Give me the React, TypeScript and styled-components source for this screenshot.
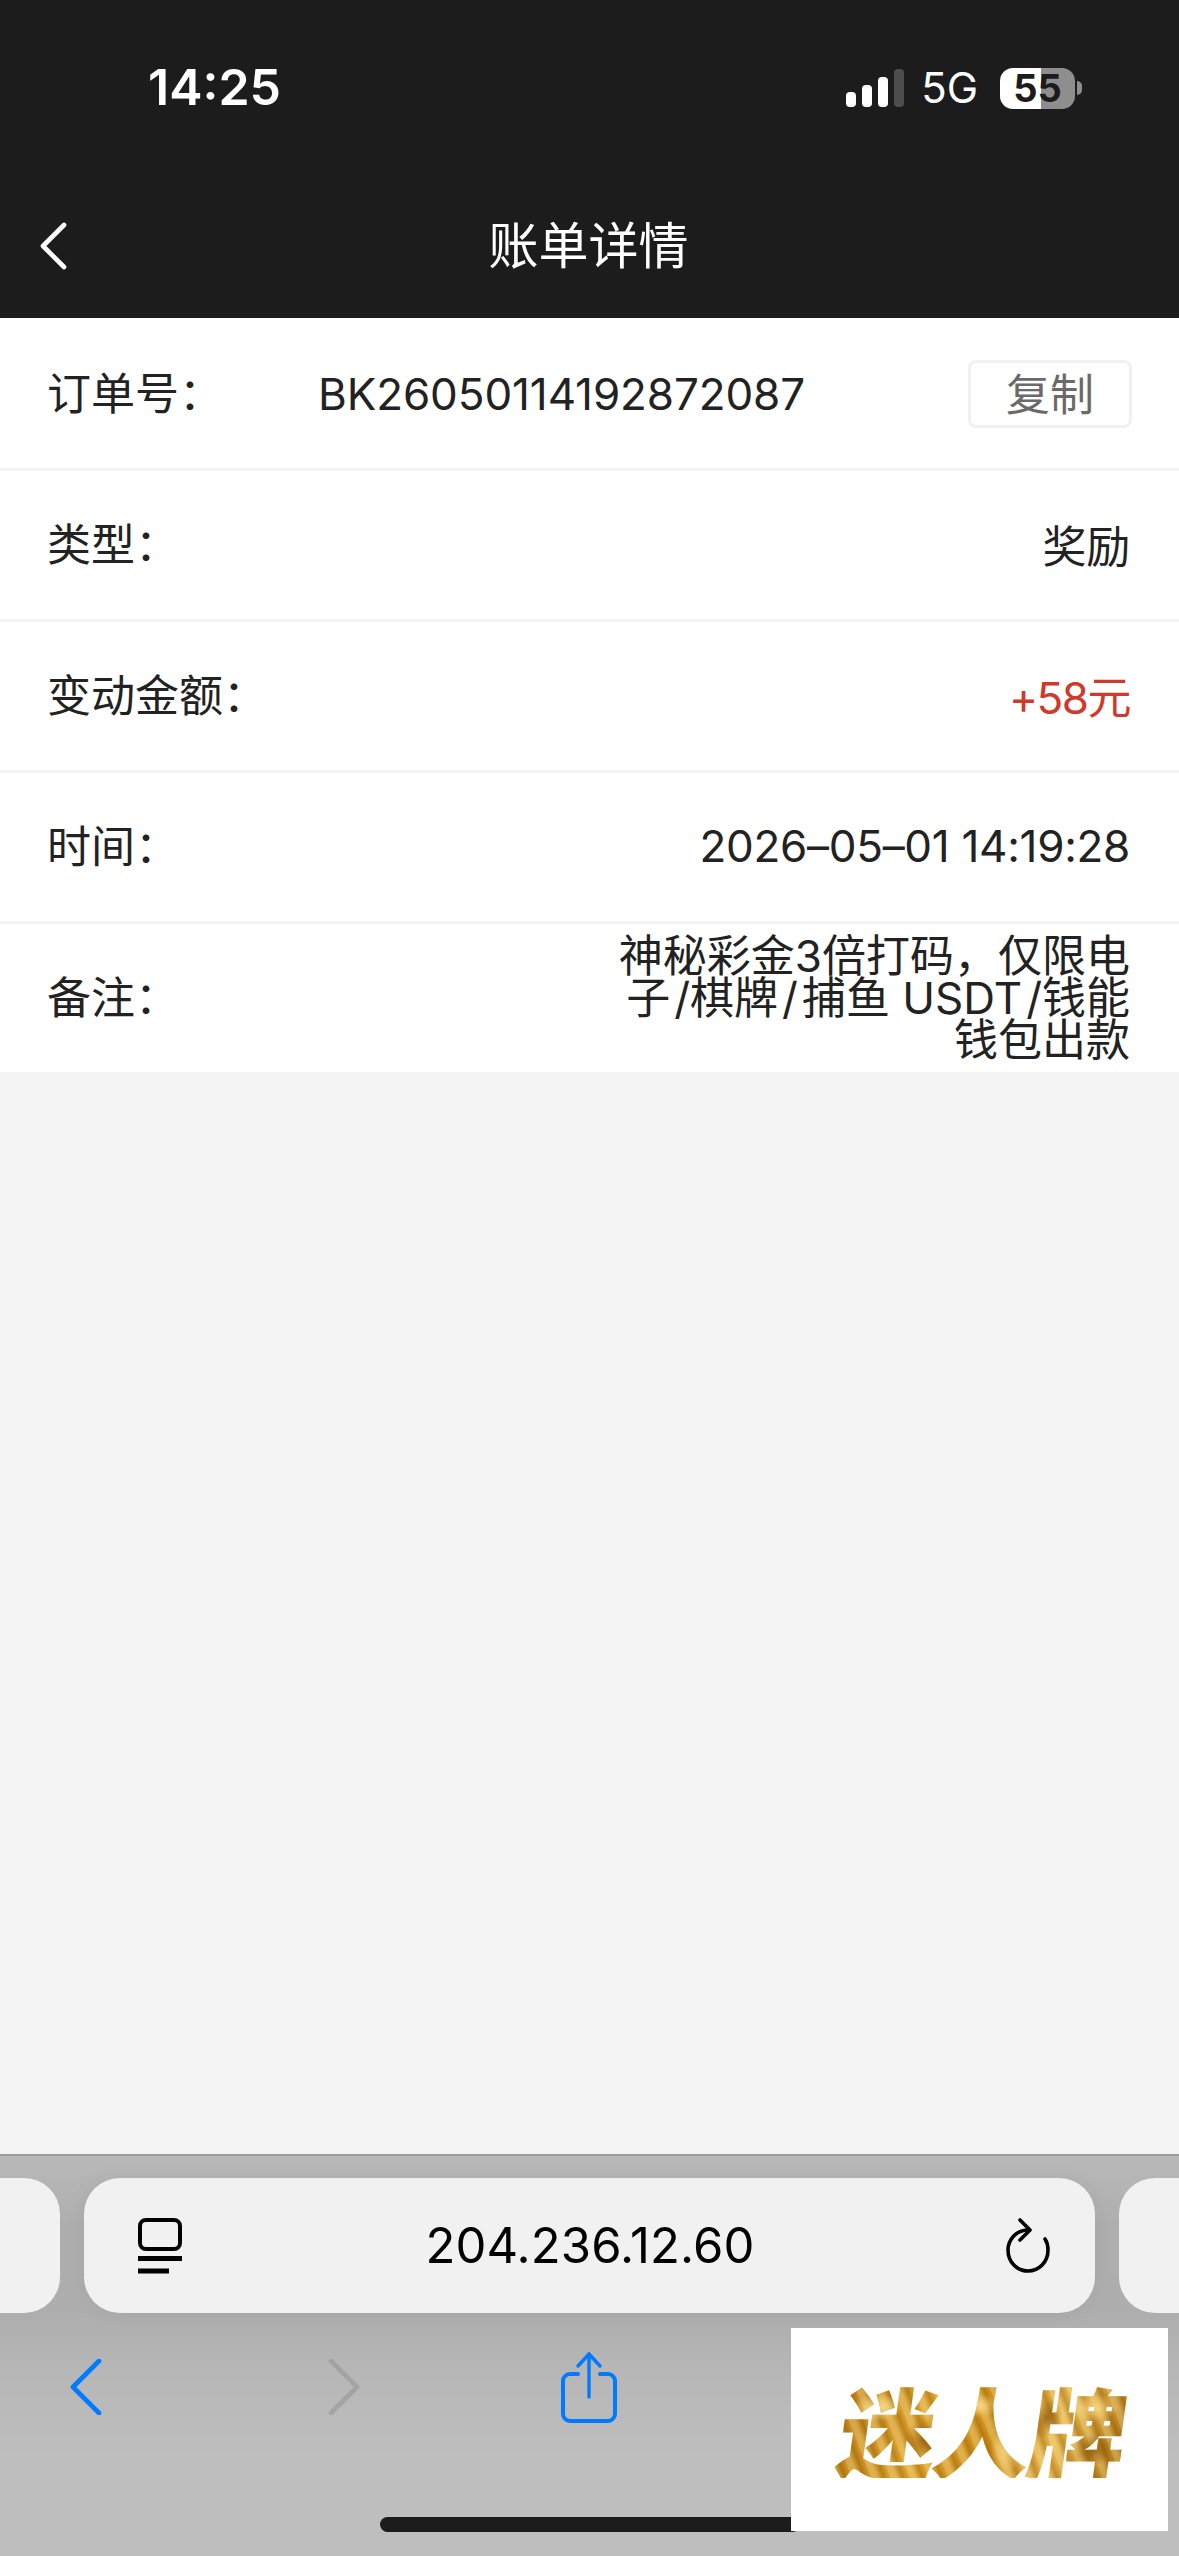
import styled, { createGlobalStyle } from 'styled-components'

const SANS = `Inter, "Noto Sans CJK SC", sans-serif`

const GlobalStyle = createGlobalStyle`
	html, body {
		margin: 0;
		padding: 0;
		background: #f3f3f3;
	}
	* {
		box-sizing: border-box;
	}
`

const rows = [
	{ label: '类型：', value: '奖励' },
	{ label: '变动金额：', value: '+58元', red: true },
	{ label: '时间：', value: '2026–05–01 14:19:28' }
]

// hair spaces: the slashes sit wider in the reference font
const NOTE = '神秘彩金3倍打码，仅限电子\u200A/棋牌\u200A/\u200A捕鱼 USDT\u200A/钱能钱包出款'

const Signal = () => (
	<svg width="58" height="38" viewBox="0 0 58 38" fill="#fff">
		<rect x="0" y="23" width="10" height="15" rx="4" />
		<rect x="16" y="16" width="10" height="22" rx="4" />
		<rect x="32" y="8" width="10" height="30" rx="4" />
		<rect x="48" y="0" width="10" height="38" rx="4" fill="#4d4d4d" />
	</svg>
)

const TabsIcon = () => (
	<svg width="46" height="56" viewBox="0 0 46 56" fill="none" stroke="#000" strokeWidth="4">
		<rect x="3" y="2" width="40" height="29" rx="6" />
		<path d="M1 40.5h44" strokeWidth="5" />
		<path d="M1 53h31" strokeWidth="5" />
	</svg>
)

const ReloadIcon = () => (
	<svg width="46" height="56" viewBox="0 0 46 56" fill="none" stroke="#000" strokeWidth="3.6" strokeLinecap="round" strokeLinejoin="round">
		<path d="M23 12C11 12 3 22 3 32c0 12 9 21 20 21s20-9 20-21c0-4-1-8-3-11" />
		<path d="M15 2l10 10-10 10" />
	</svg>
)

const Chevron = ({ flip, color }: { flip?: boolean; color: string }) => (
	<svg width="32" height="56" viewBox="0 0 32 56" fill="none" stroke={color} strokeWidth="4.6" strokeLinecap="round" strokeLinejoin="round">
		<path d={flip ? 'M3 2l26 26L3 54' : 'M29 2L3 28l26 26'} />
	</svg>
)

const ShareIcon = () => (
	<svg width="56" height="72" viewBox="0 0 56 72" fill="none" stroke="#007aff" strokeWidth="4" strokeLinecap="round" strokeLinejoin="round">
		<path d="M17 23H9a7 7 0 0 0-7 7v33a7 7 0 0 0 7 7h38a7 7 0 0 0 7-7V30a7 7 0 0 0-7-7h-8" />
		<path d="M28 46V3" strokeWidth="3.4" />
		<path d="M17 15L28 3l11 12" strokeWidth="3.4" />
	</svg>
)

export default function App() {
	return (
		<>
			<GlobalStyle />
			<Page>
				<Header>
					<StatusBar>
						<Clock>14:25</Clock>
						<StatusRight>
							<Signal />
							<Network>5G</Network>
							<Battery>
								<BatteryBody>55</BatteryBody>
								<BatteryNub />
							</Battery>
						</StatusRight>
					</StatusBar>
					<NavBar>
						<BackButton>
							<svg width="28" height="48" viewBox="0 0 28 48" fill="none" stroke="#fff" strokeWidth="4.6" strokeLinecap="round" strokeLinejoin="round">
								<path d="M25 3L4 24l21 21" />
							</svg>
						</BackButton>
						<NavTitle>账单详情</NavTitle>
					</NavBar>
				</Header>

				<List>
					<Row>
						<OrderLabel>订单号：</OrderLabel>
						<OrderValue>BK26050114192872087</OrderValue>
						<CopyButton>复制</CopyButton>
					</Row>
					{rows.map((row) => (
						<Row key={row.label}>
							<Label>{row.label}</Label>
							<Value $red={row.red}>{row.value}</Value>
						</Row>
					))}
					<Row>
						<Label>备注：</Label>
						<Note>{NOTE}</Note>
					</Row>
				</List>

				<Spacer />

				<Toolbar>
					<UrlRow>
						<SideTab />
						<UrlBar>
							<TabsIcon />
							<UrlText>204.236.12.60</UrlText>
							<ReloadIcon />
						</UrlBar>
						<SideTab $right />
					</UrlRow>
					<NavIcons>
						<Chevron color="#007aff" />
						<Chevron flip color="#a4a4a4" />
						<ShareIcon />
					</NavIcons>
					<HomeBar />
					<LogoCard>
						<LogoText>迷人牌</LogoText>
					</LogoCard>
				</Toolbar>
			</Page>
		</>
	)
}

const Page = styled.div`
	width: 1179px;
	height: 2556px;
	display: flex;
	flex-direction: column;
	overflow: hidden;
	background: #f3f3f3;
	font-family: ${SANS};
	color: #222;
`

const Header = styled.header`
	height: 318px;
	background: #1c1c1c;
	color: #fff;
	display: flex;
	flex-direction: column;
`

const StatusBar = styled.div`
	height: 170px;
	padding: 60px 97px 0 148px;
	display: flex;
	justify-content: space-between;
	align-items: flex-start;
`

const Clock = styled.div`
	font-size: 50px;
	font-weight: 600;
	line-height: 54px;
`

const StatusRight = styled.div`
	display: flex;
	align-items: center;
	height: 38px;
	margin-top: 9px;
	gap: 20px;
`

const Network = styled.div`
	font-size: 42px;
	font-weight: 400;
	line-height: 38px;
	margin-left: -3px;
`

const Battery = styled.div`
	display: flex;
	align-items: center;
	gap: 2px;
	margin-left: 2px;
`

const BatteryBody = styled.div`
	width: 75px;
	height: 41px;
	border-radius: 13px;
	background: linear-gradient(90deg, #fff 0 41px, #8e8e8e 41px);
	color: #1c1c1c;
	font-size: 38px;
	font-weight: 700;
	line-height: 41px;
	text-align: center;
`

const BatteryNub = styled.div`
	width: 5px;
	height: 14px;
	border-radius: 0 6px 6px 0;
	background: #8e8e8e;
`

const NavBar = styled.div`
	position: relative;
	height: 148px;
	display: flex;
	align-items: flex-start;
	justify-content: center;
`

const BackButton = styled.div`
	position: absolute;
	left: 39px;
	top: 52px;
	line-height: 0;
`

const NavTitle = styled.div`
	font-size: 50px;
	line-height: 60px;
	margin-top: 46px;
	margin-right: 2px;
`

const List = styled.section`
	background: #fff;
	padding-top: 2px;
`

const Row = styled.div`
	height: 151px;
	padding: 0 49px 0 47px;
	display: flex;
	align-items: center;
	justify-content: space-between;
	border-bottom: 3px solid #f3f3f3;
	font-size: 44px;

	&:last-child {
		height: 148px;
		border-bottom: 0;
	}
`

const Label = styled.div`
	white-space: nowrap;
	padding-bottom: 6px;
`

const OrderLabel = styled(Label)`
	width: 271px;
`

const OrderValue = styled.div`
	flex: 1;
	white-space: nowrap;
	letter-spacing: -0.1px;
`

const Value = styled.div<{ $red?: boolean }>`
	color: ${({ $red }) => ($red ? '#d0392b' : '#222')};
	white-space: nowrap;
	letter-spacing: ${({ $red }) => ($red ? '-1.5px' : '-0.3px')};
	padding-bottom: 3px;
`

const Note = styled.div`
	width: 514px;
	text-align: right;
	line-height: 42px;
`

const CopyButton = styled.div`
	width: 164px;
	height: 68px;
	padding-bottom: 4px;
	border: 3px solid #f1f1f1;
	border-radius: 8px;
	color: #6a6a6a;
	display: flex;
	align-items: center;
	justify-content: center;
	margin-right: -2px;
`

const Spacer = styled.div`
	flex: 1;
`

const Toolbar = styled.footer`
	position: relative;
	height: 402px;
	border-top: 2px solid #9c9c9c;
	background: linear-gradient(180deg, #b9b9b9 0, #aeaeae 70px, #aeaeae 160px, #b6b6b6 210px, #bebebe 300px);
	padding-top: 22px;
`

const UrlRow = styled.div`
	display: flex;
	gap: 24px;
	height: 135px;
`

const SideTab = styled.div<{ $right?: boolean }>`
	width: 60px;
	background: #f1f1f1;
	border-radius: ${({ $right }) => ($right ? '36px 0 0 36px' : '0 36px 36px 0')};
`

const UrlBar = styled.div`
	flex: 1;
	background: #f1f1f1;
	border-radius: 36px;
	padding: 0 44px 0 53px;
	display: flex;
	align-items: center;
	justify-content: space-between;
	box-shadow: 0 0 20px rgba(0, 0, 0, 0.05);
`

const UrlText = styled.div`
	font-size: 49px;
	color: #000;
	margin-right: 8px;
	letter-spacing: 0.1px;
`

const NavIcons = styled.nav`
	display: flex;
	align-items: center;
	height: 72px;
	margin-top: 38px;
	padding-left: 70px;

	svg:nth-child(2) {
		margin-left: 226px;
	}
	svg:nth-child(3) {
		margin-left: 201px;
	}
`

const HomeBar = styled.div`
	position: absolute;
	left: 380px;
	bottom: 24px;
	width: 420px;
	height: 15px;
	border-radius: 8px;
	background: #1c1c1c;
`

const LogoCard = styled.div`
	position: absolute;
	left: 791px;
	top: 172px;
	width: 377px;
	height: 203px;
	background: #fff;
	display: flex;
	align-items: center;
	justify-content: center;
`

const LogoText = styled.div`
	font-family: "Noto Sans CJK SC", sans-serif;
	font-size: 98px;
	font-weight: 900;
	line-height: 100px;
	letter-spacing: -3px;
	margin: -4px 0 0 6px;
	transform: skewX(-8deg);
	color: transparent;
	background:
		radial-gradient(ellipse 26px 14px at 12% 30%, rgba(255, 236, 160, 0.85), transparent),
		radial-gradient(ellipse 20px 24px at 30% 62%, rgba(140, 80, 0, 0.75), transparent),
		radial-gradient(ellipse 24px 12px at 47% 28%, rgba(255, 225, 140, 0.85), transparent),
		radial-gradient(ellipse 18px 26px at 60% 70%, rgba(255, 230, 150, 0.8), transparent),
		radial-gradient(ellipse 16px 20px at 72% 40%, rgba(130, 75, 0, 0.7), transparent),
		radial-gradient(ellipse 26px 14px at 88% 30%, rgba(255, 220, 130, 0.8), transparent),
		radial-gradient(ellipse 20px 16px at 90% 72%, rgba(130, 75, 0, 0.7), transparent),
		repeating-linear-gradient(62deg, rgba(255, 236, 170, 0.35) 0 5px, rgba(130, 75, 0, 0.3) 11px, rgba(255, 215, 110, 0.2) 17px),
		linear-gradient(100deg, #b87a10, #dca128 30%, #c98710 55%, #e6b64c 75%, #a86c0c);
	-webkit-background-clip: text;
	background-clip: text;
`
